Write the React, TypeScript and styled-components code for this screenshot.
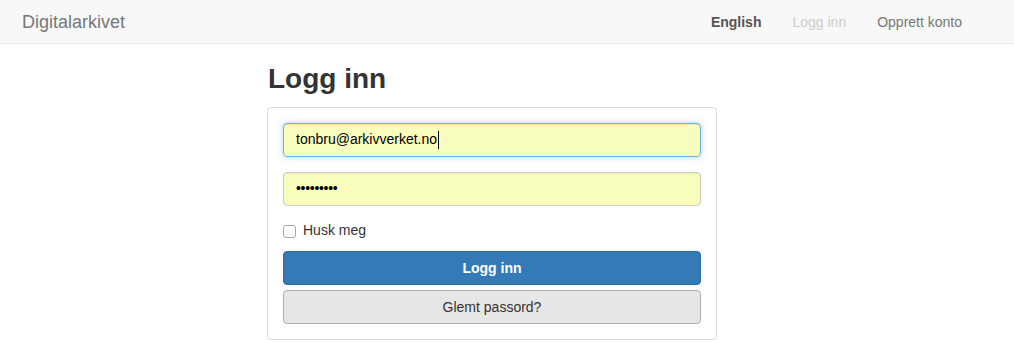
import React from "react";
import styled, { createGlobalStyle } from "styled-components";

const GlobalStyle = createGlobalStyle`
  html, body {
    margin: 0;
    padding: 0;
    background: #ffffff;
    font-family: "Liberation Sans", Arial, Helvetica, sans-serif;
    font-size: 14px;
    line-height: 1.42857;
    color: #333333;
  }
  * {
    box-sizing: border-box;
  }
`;

const Navbar = styled.nav`
  display: flex;
  align-items: center;
  justify-content: space-between;
  height: 44px;
  background: #f8f8f8;
  border-bottom: 1px solid #e7e7e7;
  padding: 0 52px 0 22px;
`;

const Brand = styled.a`
  font-size: 18px;
  line-height: 20px;
  color: #777777;
  text-decoration: none;
`;

const NavList = styled.ul`
  display: flex;
  gap: 31px;
  list-style: none;
  margin: 0;
  padding: 0;
`;

const NavItem = styled.li<{ $active?: boolean; $disabled?: boolean }>`
  font-size: 14px;
  line-height: 20px;
  font-weight: ${(p) => (p.$active ? 700 : 400)};
  color: ${(p) => (p.$disabled ? "#cccccc" : p.$active ? "#555555" : "#777777")};
`;

const Main = styled.main`
  width: 450px;
  margin-left: 267px;
  padding-top: 20px;
`;

const Title = styled.h1`
  margin: 0 0 12px 1px;
  font-size: 28px;
  line-height: 1.1;
  font-weight: 700;
  color: #333333;
`;

const Panel = styled.div`
  display: flex;
  flex-direction: column;
  border: 1px solid #dddddd;
  border-radius: 4px;
  padding: 15px;
  box-shadow: 0 1px 1px rgba(0, 0, 0, 0.05);
`;

const Field = styled.div<{ $focused?: boolean }>`
  display: flex;
  align-items: center;
  height: 34px;
  padding: 6px 12px;
  margin-bottom: 15px;
  font-size: 14px;
  color: #000000;
  background: #fafebd;
  border: 1px solid ${(p) => (p.$focused ? "#66afe9" : "#cccccc")};
  border-radius: 4px;
  box-shadow: ${(p) =>
    p.$focused
      ? "inset 0 1px 1px rgba(0,0,0,.075), 0 0 6px rgba(102,175,233,.5)"
      : "inset 0 1px 1px rgba(0,0,0,.075)"};
`;

const Caret = styled.span`
  display: inline-block;
  width: 1px;
  height: 18px;
  background: #000000;
  margin-left: 1px;
`;

const Dots = styled.span`
  letter-spacing: -0.3px;
  font-size: 14px;
`;

const CheckRow = styled.label`
  display: flex;
  align-items: center;
  gap: 7px;
  height: 20px;
  margin-bottom: 10px;
  padding-top: 1px;
  font-size: 14px;
  color: #333333;
`;

const CheckBox = styled.span`
  width: 13px;
  height: 13px;
  border: 1px solid #a6a6a6;
  border-radius: 3px;
  background: #ffffff;
`;

const Button = styled.button<{ $primary?: boolean }>`
  display: block;
  width: 100%;
  height: 34px;
  padding: 6px 12px;
  font-family: inherit;
  font-size: 14px;
  font-weight: ${(p) => (p.$primary ? 700 : 400)};
  color: ${(p) => (p.$primary ? "#ffffff" : "#333333")};
  background: ${(p) => (p.$primary ? "#337ab7" : "#e6e6e6")};
  border: 1px solid ${(p) => (p.$primary ? "#2e6da4" : "#adadad")};
  border-radius: 4px;
  & + & {
    margin-top: 5px;
  }
`;

export default function App() {
  return (
    <>
      <GlobalStyle />
      <Navbar>
        <Brand>Digitalarkivet</Brand>
        <NavList>
          <NavItem $active>English</NavItem>
          <NavItem $disabled>Logg inn</NavItem>
          <NavItem>Opprett konto</NavItem>
        </NavList>
      </Navbar>
      <Main>
        <Title>Logg inn</Title>
        <Panel>
          <Field $focused>
            tonbru@arkivverket.no
            <Caret />
          </Field>
          <Field>
            <Dots>•••••••••</Dots>
          </Field>
          <CheckRow>
            <CheckBox />
            Husk meg
          </CheckRow>
          <Button $primary>Logg inn</Button>
          <Button>Glemt passord?</Button>
        </Panel>
      </Main>
    </>
  );
}
